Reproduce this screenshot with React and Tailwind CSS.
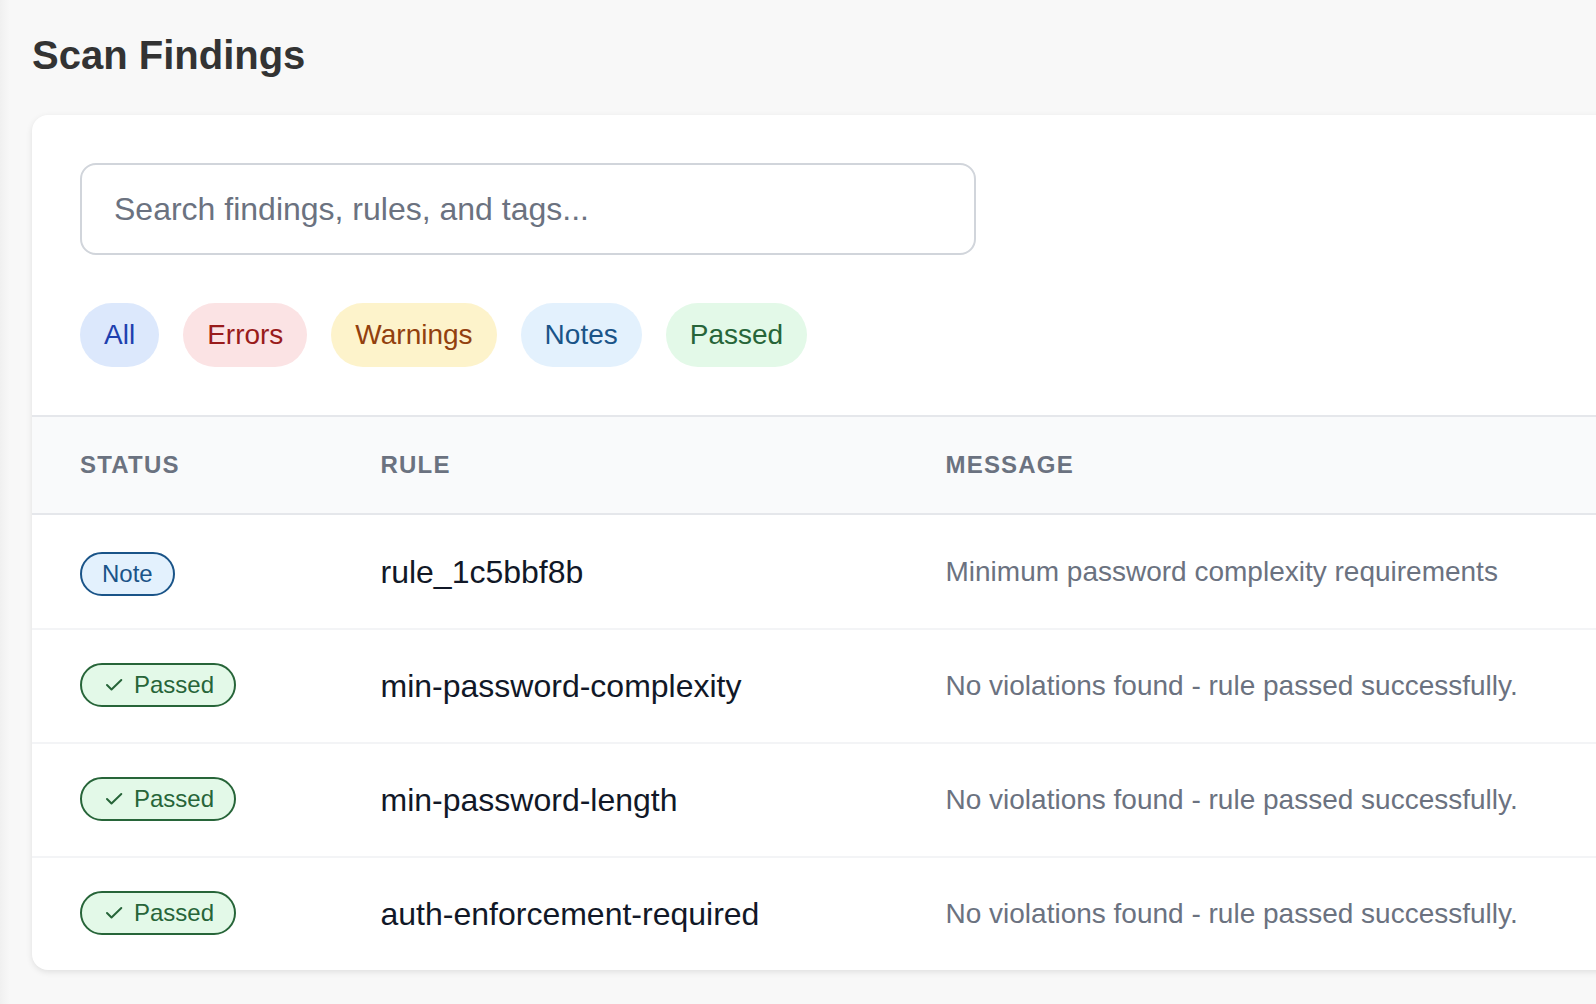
const SANS = "font-['Liberation_Sans',Arial,sans-serif]";

function Check() {
  return (
    <svg viewBox="0 0 20 20" className="w-[20px] h-[20px] shrink-0" fill="none" stroke="currentColor" strokeWidth="2" strokeLinecap="round" strokeLinejoin="round">
      <path d="M3 10 L7.5 14.5 L17.3 5" />
    </svg>
  );
}

function Filter({ label, cls }) {
  return <button className={`h-[64px] px-[24px] rounded-full text-[28px] leading-none ${cls}`}>{label}</button>;
}

function Row({ badge, rule, message, cls }) {
  return (
    <div className={`grid grid-cols-[300.5px_565px_1fr] items-center pl-[48px] ${cls}`}>
      <div className="flex">{badge}</div>
      <div className="text-[32px] text-[#111827] leading-none">{rule}</div>
      <div className="text-[28px] text-[#6b7280] leading-none whitespace-nowrap">{message}</div>
    </div>
  );
}

function Passed() {
  return (
    <span className="inline-flex items-center gap-[10px] h-[44px] mb-[2px] pl-[22px] pr-[20px] rounded-full border-2 border-[#276539] bg-[#e3f9e8] text-[#276539] text-[24px] leading-none">
      <Check />
      Passed
    </span>
  );
}

function Note() {
  return (
    <span className="inline-flex items-center h-[44px] mt-[5px] px-[20px] rounded-full border-2 border-[#1a5488] bg-[#e3f1fd] text-[#1a5488] text-[24px] leading-none">
      Note
    </span>
  );
}

export default function App() {
  return (
    <div className={`${SANS} relative h-[1004px] w-[1596px] overflow-hidden bg-[#f8f8f8] pl-[32px]`}>
      <div className="absolute left-0 top-0 h-full w-[10px] bg-gradient-to-r from-[#f0f0f0] to-[#f8f8f8]" />
      <h1 className="relative pt-[32px] text-[40px] leading-[46px] font-bold text-[#333333]">Scan Findings</h1>
      <div className="relative mt-[37px] w-[1700px] h-[855px] bg-white rounded-[16px] shadow-[0_2px_6px_rgba(0,0,0,0.1)] overflow-hidden">
        <div className="px-[48px] pt-[48px] pb-[48px]">
          <div className="flex items-center w-[896px] h-[92px] pl-[32px] rounded-[16px] border-2 border-[#d1d5db] text-[32px] text-[#6b7280] leading-none">
            Search findings, rules, and tags...
          </div>
          <div className="flex gap-[24px] mt-[48px]">
            <Filter label="All" cls="bg-[#dce8fc] text-[#1e40af]" />
            <Filter label="Errors" cls="bg-[#fbe3e4] text-[#991b1b]" />
            <Filter label="Warnings" cls="bg-[#fdf3cb] text-[#92400e]" />
            <Filter label="Notes" cls="bg-[#e3f1fd] text-[#1a5488]" />
            <Filter label="Passed" cls="bg-[#e3f9e8] text-[#276539]" />
          </div>
        </div>
        <div className="grid grid-cols-[300.5px_565px_1fr] items-center h-[100px] pl-[48px] bg-[#f9fafb] border-y-2 border-[#e5e7eb] text-[24px] font-bold tracking-[1.2px] text-[#6b7280] leading-none">
          <div>STATUS</div>
          <div>RULE</div>
          <div>MESSAGE</div>
        </div>
        <Row cls="h-[115px] border-b-2 border-[#f3f4f6]" badge={<Note />} rule="rule_1c5bbf8b" message="Minimum password complexity requirements" />
        <Row cls="h-[114px] border-b-2 border-[#f3f4f6]" badge={<Passed />} rule="min-password-complexity" message="No violations found - rule passed successfully." />
        <Row cls="h-[114px] border-b-2 border-[#f3f4f6]" badge={<Passed />} rule="min-password-length" message="No violations found - rule passed successfully." />
        <Row cls="h-[112px]" badge={<Passed />} rule="auth-enforcement-required" message="No violations found - rule passed successfully." />
      </div>
    </div>
  );
}
